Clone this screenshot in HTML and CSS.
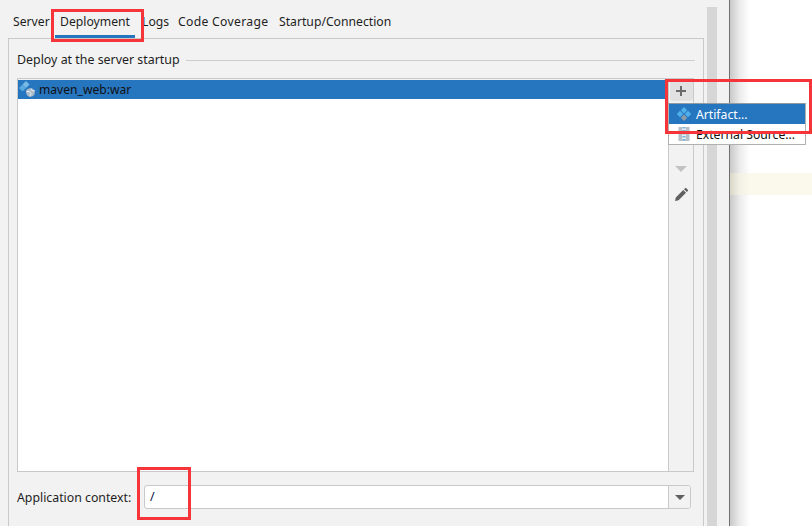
FILE: index.html
```html
<!DOCTYPE html>
<html lang="en">
<head>
<meta charset="utf-8">
<title>Deployment</title>
<link rel="stylesheet" href="styles.css">
</head>
<body>
<div class="screen">
  <main class="dialog">
    <div class="content">
      <nav class="tabs">
        <span class="tab tab-server">Server</span>
        <span class="tab tab-active">Deployment</span>
        <span class="tab tab-logs">Logs</span>
        <span class="tab tab-coverage">Code Coverage</span>
        <span class="tab">Startup/Connection</span>
      </nav>
      <section class="panel">
        <div class="legend"><span>Deploy at the server startup</span><i class="legend-line"></i></div>
        <div class="deploy">
          <div class="list">
            <div class="row">
              <svg class="artifact-web" viewBox="0 0 17 17" width="17" height="17" aria-hidden="true">
                <path d="M7 0l3.500 3.500L7 7 3.500 3.500z" fill="#79b9e6"/>
                <path d="M3.500 3.500L7 7 3.500 10.500 0 7z" fill="#5aa9e0"/>
                <path d="M6.500 10l2.500-2.500 1 1-2.500 2.500z" fill="#8fa3b5"/>
                <circle cx="11.500" cy="11.500" r="4.300" fill="#a9bac8"/>
                <path d="M7.500 10.500h3l1.500 2-1.300 3M12 7.500l1.200 2.300h2.700" stroke="#e8f0f5" stroke-width="1" fill="none"/>
              </svg>
              <span>maven_web:war</span>
            </div>
          </div>
          <div class="toolbar">
            <button class="tool tool-add" type="button">
              <svg viewBox="0 0 12 12" width="12" height="12" aria-hidden="true"><path d="M5 1h2v4h4v2H7v4H5V7H1V5h4z" fill="#6b6b6b"/></svg>
            </button>
            <div class="tool-down"><i class="triangle"></i></div>
            <div class="tool-edit">
              <svg viewBox="0 0 16 16" width="16" height="16" aria-hidden="true"><path d="M2 14l.8-3.600 7.400-7.400 2.800 2.800-7.400 7.400zM11 2.200l1-1a.9.9 0 0 1 1.300 0l1.500 1.500a.9.9 0 0 1 0 1.300l-1 1z" fill="#606060"/></svg>
            </div>
          </div>
        </div>
        <div class="context">
          <label class="context-label">Application context:</label>
          <div class="combo">
            <span class="combo-value">/</span>
            <span class="combo-arrow"><i class="combo-triangle"></i></span>
          </div>
        </div>
      </section>
    </div>
    <div class="scroll-track"><div class="scroll-thumb"></div></div>
  </main>
  <aside class="backdrop"><div class="strip"></div></aside>
</div>

<div class="menu">
  <div class="menu-item menu-selected">
    <svg viewBox="0 0 16 16" width="16" height="16" aria-hidden="true">
      <path d="M8 1l3.200 3.200L8 7.400 4.800 4.200z" fill="#4fb0ea"/>
      <path d="M4 4.800L7.200 8 4 11.200.8 8z" fill="#4fb0ea"/>
      <path d="M12 4.800L15.200 8 12 11.200 8.800 8z" fill="#4fb0ea"/>
      <path d="M8 8.600l3.200 3.200L8 15l-3.200-3.200z" fill="#8d9ba8"/>
    </svg>
    <span>Artifact...</span>
  </div>
  <div class="menu-item">
    <svg viewBox="0 0 12 16" width="12" height="16" class="archive" aria-hidden="true">
      <rect x="0.500" y="1" width="11" height="14" fill="#b4c0ca"/>
      <path d="M5 1h2v1.500H5zM5 4h2v1.500H5zM5 7h2v1.500H5zM5 10h2v1.500H5zM5 13h2v1.500H5z" fill="#6fb7e6"/>
      <path d="M4 2.500h4V4H4zM4 5.500h4V7H4zM4 8.500h4V10H4zM4 11.500h4V13H4z" fill="#e8eef2"/>
    </svg>
    <span>External Source...</span>
  </div>
</div>

<div class="mark mark-tab"></div>
<div class="mark mark-menu"></div>
<div class="mark mark-context"></div>
</body>
</html>
```
FILE: styles.css
```css
* { box-sizing: border-box; }
html, body { margin: 0; height: 100%; overflow: hidden; }
body {
  font-family: "Noto Sans", "Open Sans", sans-serif;
  font-size: 12.4px;
  color: #1e1e1e;
  background: #fff;
}
.screen { display: flex; width: 812px; height: 526px; }
.dialog {
  width: 730px;
  flex: none;
  display: flex;
  background: #f2f2f2;
  border-right: 1px solid #6f6f6f;
  padding-left: 8px;
}
.content { width: 696px; flex: none; display: flex; flex-direction: column; }
.tabs { display: flex; height: 38px; padding-left: 5px; font-size: 12.2px; }
.tab { padding-top: 13px; line-height: 18px; white-space: nowrap; }
.tab-server { width: 42px; }
.tab-active {
  width: 80px;
  padding-left: 5px;
  height: 38px;
  border-bottom: 3px solid #2675bf;
}
.tab-logs { width: 43px; padding-left: 7px; }
.tab-coverage { width: 101px; letter-spacing: 0.3px; }
.panel {
  flex: 1;
  display: flex;
  flex-direction: column;
  border: 1px solid #c9c9c9;
  border-bottom: 0;
  padding: 12px 8px 0;
}
.legend { display: flex; align-items: center; gap: 6px; height: 18px; line-height: 18px; margin-bottom: 9px; }
.legend-line { flex: 1; height: 1px; background: #cdcdcd; }
.deploy { display: flex; height: 394px; border: 1px solid #c9c9c9; width: 677px; }
.list { flex: 1; background: #fff; }
.row {
  display: flex;
  align-items: center;
  gap: 3px;
  height: 20px;
  background: #2675bf;
  padding-left: 1px;
  border-top: 1px solid #f2f2f2;
  color: #111;
  font-size: 12.1px;
}
.toolbar {
  width: 25px;
  flex: none;
  background: #f2f2f2;
  border-left: 1px solid #c9c9c9;
  display: flex;
  flex-direction: column;
  align-items: center;
}
.tool {
  display: flex;
  align-items: center;
  justify-content: center;
  width: 23px;
  height: 21px;
  padding: 0;
  margin-top: 1px;
  border: 0;
  border-radius: 3px;
  background: #e1e1e1;
}
.tool-down { margin-top: 63px; height: 10px; display: flex; align-items: center; }
.triangle { border: solid transparent; border-width: 6px 6px 0; border-top-color: #c2c2c2; }
.tool-edit { margin-top: 13px; height: 16px; }
.context { display: flex; align-items: center; height: 24px; margin-top: 13px; }
.context-label { width: 127px; flex: none; white-space: nowrap; font-size: 12.3px; }
.combo {
  width: 547px;
  height: 24px;
  flex: none;
  display: flex;
  background: #fff;
  border: 1px solid #c9c9c9;
  border-radius: 3px;
}
.combo-value { flex: 1; padding-left: 5px; line-height: 21px; color: #10104a; }
.combo-arrow {
  width: 22px;
  border-left: 1px solid #c9c9c9;
  background: #f2f2f2;
  display: flex;
  align-items: center;
  justify-content: center;
  border-radius: 0 3px 3px 0;
}
.combo-triangle { border: solid transparent; border-width: 5px 5px 0; border-top-color: #5f5f5f; }
.scroll-track { margin-left: 3px; padding-top: 7px; width: 10px; flex: none; }
.scroll-thumb { height: 100%; background: #d6d6d6; }
.backdrop {
  flex: 1;
  position: relative;
  background: linear-gradient(90deg, #c9c9c9 0, #ececec 10px, #fff 20px);
}
.strip {
  margin-top: 173px;
  height: 22px;
  background: linear-gradient(90deg, #d9d6c9 0, #f3f1e6 10px, #fbf8ec 20px);
}
.menu {
  position: absolute;
  left: 668px;
  top: 103px;
  width: 138px;
  height: 42px;
  background: #fff;
  border: 1px solid #b0b0b0;
  border-top-color: #8f9aa5;
  font-size: 12.2px;
}
.menu-item {
  display: flex;
  align-items: center;
  height: 20px;
  padding-left: 7px;
  gap: 4px;
  white-space: nowrap;
  color: #111;
  overflow: hidden;
}
.menu-selected { background: #2675bf; color: #fff; }
.archive { margin: 0 2px; }
.mark { position: absolute; border: 3px solid #f6353b; pointer-events: none; }
.mark-tab { left: 51px; top: 9px; width: 93px; height: 33px; }
.mark-menu { left: 665px; top: 79px; width: 147px; height: 55px; }
.mark-context { left: 137px; top: 467px; width: 54px; height: 53px; }
```
